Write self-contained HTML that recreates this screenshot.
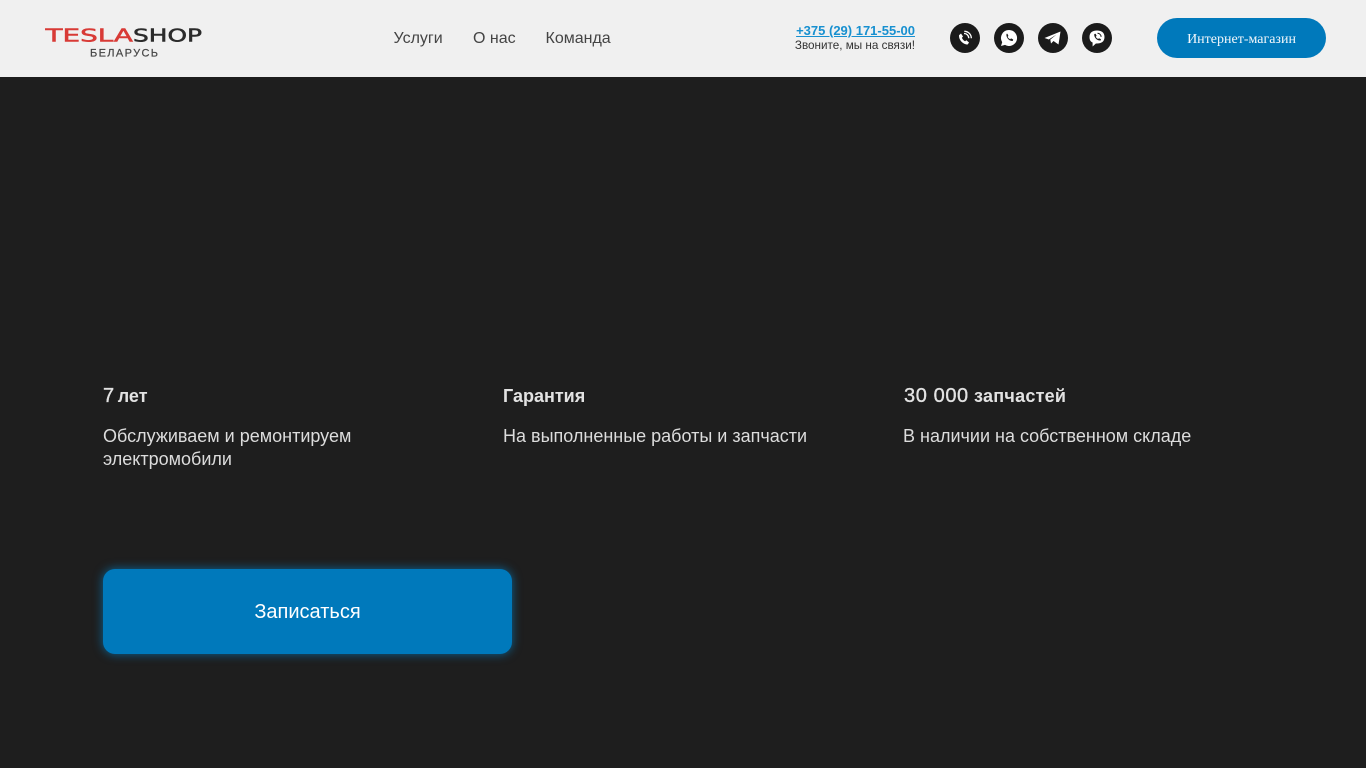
<!DOCTYPE html>
<html lang="ru"><head><meta charset="utf-8"><title>TeslaShop</title>
<style>
*{box-sizing:border-box}
html,body{margin:0;padding:0;width:1366px;height:768px;overflow:hidden;background:#1e1e1e;font-family:"Liberation Sans",sans-serif}
.a{position:absolute;white-space:nowrap}
#hd{position:absolute;left:0;top:0;width:1366px;height:77px;background:#f0f0f0}
.nav{font-size:16px;color:#444;top:29px;line-height:19px}
.ic{position:absolute;top:23px;width:30px;height:30px;border-radius:50%;background:#1b1b1b}
.ic svg{display:block;width:30px;height:30px}
.h{font-size:18px;font-weight:bold;color:#e2e2e2;top:385px;line-height:23px}
.h span{font-size:20px;font-weight:normal;letter-spacing:.6px;-webkit-text-stroke:.35px #e2e2e2}
.t{font-size:18px;color:#dcdcdc;line-height:23px;top:425px}
</style></head><body>
<div id="hd"></div>
<svg class="a" style="left:40px;top:22px" width="170" height="40" viewBox="0 0 170 40">
<text x="5.500" y="19.500" font-family="DejaVu Sans" font-size="18" fill="#d83a36" stroke="#d83a36" stroke-width=".5" textLength="87.500" lengthAdjust="spacingAndGlyphs">TESLA</text>
<text x="93" y="19.500" font-family="DejaVu Sans" font-size="18" fill="#2b2b2b" stroke="#2b2b2b" stroke-width=".5" textLength="69" lengthAdjust="spacingAndGlyphs">SHOP</text>
<text x="50" y="34.500" font-family="Liberation Sans" font-size="11" fill="#444" stroke="#444" stroke-width=".2" textLength="68" lengthAdjust="spacing">БЕЛАРУСЬ</text>
</svg>
<div class="a nav" style="left:393.500px">Услуги</div>
<div class="a nav" style="left:473px">О нас</div>
<div class="a nav" style="left:545.500px">Команда</div>
<div class="a" style="left:785px;top:23px;width:130px;text-align:right;font-size:13px;font-weight:bold;color:#1790d0;line-height:15px;text-decoration:underline">+375 (29) 171-55-00</div>
<div class="a" style="left:780px;top:38px;width:135px;text-align:right;font-size:11.700px;color:#333;line-height:15px">Звоните, мы на связи!</div>

<div class="ic" style="left:950px"><svg viewBox="0 0 30 30"><g transform="translate(-1 1)"><path d="M10 11.200l2-1.700 2 3-1.100 1.300c.6 1.500 1.600 2.700 3.200 3.500l1.300-1 2.700 2.300-1.700 2c-4.800-.5-8.700-4.800-8.400-9.400z" fill="#fff"/><path d="M15 9.500c2.700 0 4.800 2.100 4.800 4.800M15.300 7.300c4 0 7 3 7 7" fill="none" stroke="#fff" stroke-width="1.300"/></g></svg></div>
<div class="ic" style="left:994px"><svg viewBox="0 0 30 30"><path d="M15 7a8 8 0 0 0-6.800 12.200L7 23l4-1.100A8 8 0 1 0 15 7z" fill="#fff"/><path d="M12 11l1.400-.3 1 2.200-.8 1c.6 1.100 1.400 1.800 2.500 2.400l1-.9 2.100 1.100-.4 1.400c-3.500.5-7-3.400-6.300-6.900z" fill="#1b1b1b"/></svg></div>
<div class="ic" style="left:1038px"><svg viewBox="0 0 30 30"><path d="M6.500 15L22.500 8.500 20.500 21.500 15.500 18 13 20.500 12.300 16.600 18.500 11.500 10.800 16.500z" fill="#fff"/></svg></div>
<div class="ic" style="left:1082px"><svg viewBox="0 0 30 30"><g transform="translate(0 .5)"><path d="M15 7c-4.300 0-7.500 1.800-7.500 6.500 0 3 1.100 4.700 3.100 5.500V23l3.300-3h1.100c4.300 0 7.500-1.800 7.500-6.500S19.300 7 15 7z" fill="#fff"/><path d="M12.300 10.500l1.300-.2 1 2-.8 1c.5 1 1.200 1.700 2.300 2.200l.9-.8 2 1-.4 1.300c-3.200.5-6.900-3-6.300-6.500z" fill="#1b1b1b"/><path d="M15.500 9.800c2 0 3.600 1.500 3.600 3.600" fill="none" stroke="#1b1b1b" stroke-width="1"/></g></svg></div>

<div class="a" style="left:1157px;top:18px;width:169px;height:40px;border-radius:20px;background:#0079bb;color:#f2f7fb;font-family:'Liberation Serif',serif;font-size:14px;line-height:43px;text-align:center">Интернет-магазин</div>

<div class="a h" style="left:103px"><span style="margin-right:-2px">7</span> лет</div>
<div class="a h" style="left:503px">Гарантия</div>
<div class="a h" style="left:904px;letter-spacing:.25px"><span>30 000</span> запчастей</div>
<div class="a t" style="left:103px">Обслуживаем и ремонтируем<br>электромобили</div>
<div class="a t" style="left:503px">На выполненные работы и запчасти</div>
<div class="a t" style="left:903px">В наличии на собственном складе</div>

<div class="a" style="left:103px;top:569px;width:409px;height:85px;border-radius:12px;background:#0079bb;box-shadow:0 0 10px rgba(0,140,215,.65);color:#fff;font-size:20px;line-height:86px;text-align:center">Записаться</div>
</body></html>
